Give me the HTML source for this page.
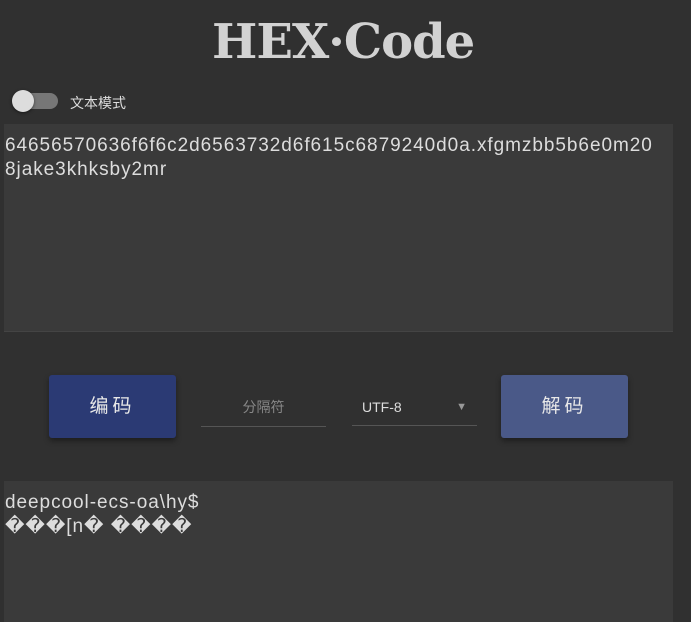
<!DOCTYPE html>
<html><head><meta charset="utf-8"><style>
body{margin:0;width:691px;height:622px;background:#303030;overflow:hidden;font-family:"Liberation Sans","Noto Sans CJK SC",sans-serif;position:relative;color:#ddd}
.title{position:absolute;left:212px;top:14px;font-family:"DejaVu Serif",serif;font-size:48px;font-weight:bold;color:#d2d2d2;letter-spacing:-1px}
.tog{position:absolute;left:14px;top:93px;width:44px;height:16px;border-radius:8px;background:#777}
.knob{position:absolute;left:12px;top:90px;width:22px;height:22px;border-radius:50%;background:#ddd;box-shadow:0 1px 3px rgba(0,0,0,.5)}
.tl{position:absolute;left:70px;top:93px;font-size:14px;color:#ddd}
.ta{position:absolute;left:4px;width:669px;background:#3a3a3a;font-size:19px;line-height:24px;color:#ddd;white-space:nowrap;letter-spacing:0.95px;padding-left:1px}
.btn{position:absolute;top:375px;width:127px;height:63px;border-radius:3px;color:#e8e8e8;font-size:19px;text-align:center;line-height:63px;letter-spacing:4px;box-shadow:0 3px 6px rgba(0,0,0,.4)}
.fld{position:absolute;top:391px;width:125px;height:35px;border-bottom:1px solid #555;font-size:14px;line-height:32px}
</style></head><body>
<div class="title">HEX·Code</div>
<div class="tog"></div><div class="knob"></div>
<div class="tl">文本模式</div>
<div class="ta" style="top:124px;height:208px;padding-top:10px;box-sizing:border-box;border-bottom:1px solid #444">64656570636f6f6c2d6563732d6f615c6879240d0a.xfgmzbb5b6e0m20<br>8jake3khksby2mr</div>
<div class="btn" style="left:49px;background:#2b3a74">编码</div>
<div class="fld" style="left:201px;color:#888;text-align:center">分隔符</div>
<div class="fld" style="left:352px;color:#ddd;padding-left:10px;box-sizing:border-box">UTF-8<span style="position:absolute;right:10px;top:0;color:#999;font-size:11px">▼</span></div>
<div class="btn" style="left:501px;background:#4a5988">解码</div>
<div class="ta" style="top:481px;height:141px;padding-top:10px;box-sizing:border-box">deepcool-ecs-oa\hy$<br>���[n� ����</div>
</body></html>
